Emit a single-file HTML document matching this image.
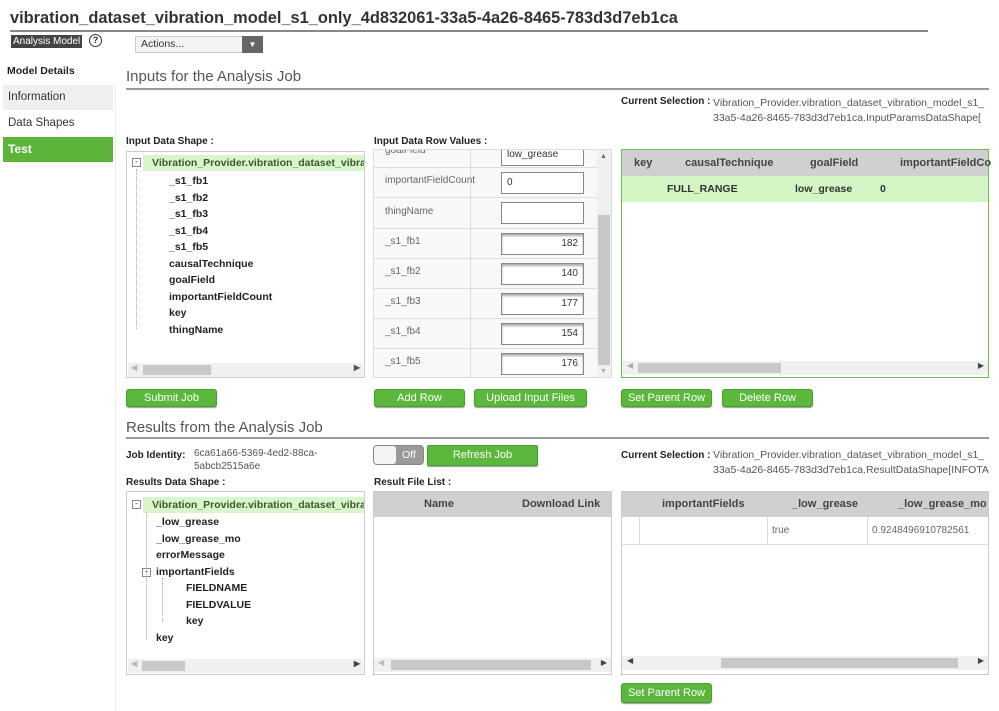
<!DOCTYPE html>
<html><head><meta charset="utf-8"><style>
*{box-sizing:border-box;margin:0;padding:0}
body{width:999px;height:711px;background:#fff;font-family:"Liberation Sans",sans-serif;font-size:11px;color:#333;position:relative;overflow:hidden}
.a{position:absolute;white-space:nowrap}
.b{font-weight:bold}
.btn{position:absolute;height:18px;background:#5cb83c;border:1px solid #4aa02c;border-radius:3px;color:#fff;text-align:center;line-height:16px;font-size:11px;box-shadow:0 1px 1px #999}
.box{position:absolute;border:1px solid #ccc;background:#fff}
.sbh{position:absolute;height:14px;background:#f0f0f0}
.thumb{position:absolute;background:#c8c8c8;top:2px;height:10px}
.tree div{position:absolute;font-weight:bold;font-size:10.5px;color:#222}
.hdr{position:absolute;background:#d0d0d0;font-weight:bold;color:#444}
.inp{position:absolute;left:127px;width:83px;height:22px;border:1px solid #888;background:#fff;font-size:10px;line-height:20px;padding:0 5px;box-shadow:inset 0 2px 2px #aaa}
.lbl{position:absolute;left:11px;font-size:10px;color:#666}
</style></head><body>

<div class="a" style="left:10px;top:9px;font-size:16.4px;font-weight:bold;color:#333">vibration_dataset_vibration_model_s1_only_4d832061-33a5-4a26-8465-783d3d7eb1ca</div>
<div class="a" style="left:10px;top:30px;width:918px;height:2px;background:#888"></div>
<div class="a" style="left:11px;top:35px;height:13px;background:#444;color:#fff;font-size:10px;padding:0 2px;line-height:13px">Analysis Model</div>
<div class="a" style="left:89px;top:34px;width:13px;height:13px;border:1.5px solid #333;border-radius:50%;font-size:9px;text-align:center;line-height:11px;font-weight:bold">?</div>
<div class="a" style="left:135px;top:36px;width:128px;height:17px;border:1px solid #ccc;background:#f4f4f4;font-size:10.5px;line-height:15px;padding-left:5px">Actions...</div>
<div class="a" style="left:242px;top:36px;width:21px;height:17px;background:#666;color:#fff;font-size:8px;text-align:center;line-height:17px">▼</div>

<div class="a b" style="left:7px;top:65px;font-size:10.5px;color:#222">Model Details</div>
<div class="a" style="left:3px;top:85px;width:110px;height:25px;background:#efefef;font-size:11.5px;line-height:25px;padding-left:5px">Information</div>
<div class="a" style="left:3px;top:110px;width:110px;height:26px;background:#fff;font-size:11.5px;line-height:26px;padding-left:5px">Data Shapes</div>
<div class="a b" style="left:3px;top:137px;width:110px;height:25px;background:#5db43b;color:#fff;font-size:12px;line-height:25px;padding-left:5px">Test</div>
<div class="a" style="left:115px;top:85px;width:1px;height:626px;background:#eee"></div>

<div class="a" style="left:126px;top:68px;font-size:15px;color:#555">Inputs for the Analysis Job</div>
<div class="a" style="left:126px;top:88px;width:863px;height:2px;background:#999"></div>
<div class="a b" style="left:621px;top:96px;font-size:10px;color:#222">Current Selection :</div>
<div class="a" style="left:713px;top:96px;font-size:10.5px;line-height:15px;color:#555">Vibration_Provider.vibration_dataset_vibration_model_s1_<br>33a5-4a26-8465-783d3d7eb1ca.InputParamsDataShape[</div>

<div class="a b" style="left:126px;top:136px;font-size:10px;color:#222">Input Data Shape :</div>
<div class="box tree" style="left:126px;top:151px;width:239px;height:227px">
 <div style="left:16px;top:3px;width:221px;height:16px;background:#d9f5cc;font-weight:bold;color:#3a5a2a;line-height:16px;padding-left:9px;overflow:hidden">Vibration_Provider.vibration_dataset_vibrati</div>
 <div style="left:5px;top:6px;width:9px;height:9px;border:1px solid #888;font-size:8px;line-height:6px;text-align:center;font-weight:normal">-</div>
 <div style="left:9px;top:17px;width:0;height:160px;border-left:1px dotted #aaa"></div>
 <div style="left:42px;top:23px">_s1_fb1</div><div style="left:42px;top:40px">_s1_fb2</div><div style="left:42px;top:56px">_s1_fb3</div><div style="left:42px;top:73px">_s1_fb4</div><div style="left:42px;top:89px">_s1_fb5</div><div style="left:42px;top:106px">causalTechnique</div><div style="left:42px;top:122px">goalField</div><div style="left:42px;top:139px">importantFieldCount</div><div style="left:42px;top:155px">key</div><div style="left:42px;top:172px">thingName</div>
 <div class="sbh" style="left:1px;top:211px;width:235px"><div class="thumb" style="left:15px;width:68px"></div><span style="position:absolute;right:3px;top:0;font-size:8px;color:#555">▶</span><span style="position:absolute;left:3px;top:0;font-size:8px;color:#bbb">◀</span></div>
</div>

<div class="a b" style="left:374px;top:136px;font-size:10px;color:#222">Input Data Row Values :</div>
<div class="box" style="left:373px;top:149px;width:239px;height:229px;border-color:#ddd;overflow:hidden">
 <div style="position:absolute;left:0;top:0;width:223px;height:229px;background:#f8f8f8"></div>
 <div style="position:absolute;left:96px;top:0;width:1px;height:229px;background:#ddd"></div>
 <div style="position:absolute;left:0;top:17px;width:223px;height:1px;background:#ddd"></div>
 <div style="position:absolute;left:0;top:47px;width:223px;height:1px;background:#ddd"></div>
 <div style="position:absolute;left:0;top:78px;width:223px;height:1px;background:#ddd"></div>
 <div style="position:absolute;left:0;top:108px;width:223px;height:1px;background:#ddd"></div>
 <div style="position:absolute;left:0;top:138px;width:223px;height:1px;background:#ddd"></div>
 <div style="position:absolute;left:0;top:168px;width:223px;height:1px;background:#ddd"></div>
 <div style="position:absolute;left:0;top:198px;width:223px;height:1px;background:#ddd"></div>
 <div class="lbl" style="top:-5px">goalField</div>
 <div class="inp" style="top:-6px;box-shadow:none">low_grease</div>
 <div class="lbl" style="top:25px">importantFieldCount</div>
 <div class="inp" style="top:22px;box-shadow:none">0</div>
 <div class="lbl" style="top:56px">thingName</div>
 <div class="inp" style="top:52px;box-shadow:none"></div>
 <div class="lbl" style="top:86px">_s1_fb1</div><div class="inp" style="top:83px;text-align:right">182</div>
 <div class="lbl" style="top:116px">_s1_fb2</div><div class="inp" style="top:113px;text-align:right">140</div>
 <div class="lbl" style="top:146px">_s1_fb3</div><div class="inp" style="top:143px;text-align:right">177</div>
 <div class="lbl" style="top:176px">_s1_fb4</div><div class="inp" style="top:173px;text-align:right">154</div>
 <div class="lbl" style="top:206px">_s1_fb5</div><div class="inp" style="top:203px;text-align:right">176</div>
 <div style="position:absolute;left:223px;top:0;width:14px;height:229px;background:#f0f0f0"></div>
 <div style="position:absolute;left:224px;top:65px;width:12px;height:150px;background:#c8c8c8"></div>
 <span style="position:absolute;left:226px;top:3px;font-size:7px;color:#666">▲</span>
 <span style="position:absolute;left:226px;top:218px;font-size:7px;color:#aaa">▼</span>
</div>

<div class="box" style="left:621px;top:149px;width:368px;height:229px;border:1px solid #6ac04a">
 <div class="hdr" style="left:0;top:0;width:366px;height:26px;font-size:11px;line-height:26px">
  <span style="position:absolute;left:12px">key</span><span style="position:absolute;left:63px">causalTechnique</span><span style="position:absolute;left:188px">goalField</span><span style="position:absolute;left:278px">importantFieldCo</span></div>
 <div style="position:absolute;left:0;top:26px;width:366px;height:26px;background:#d3f5c3;font-weight:bold;font-size:10.5px;line-height:26px;color:#333">
  <span style="position:absolute;left:45px">FULL_RANGE</span><span style="position:absolute;left:173px">low_grease</span><span style="position:absolute;left:258px">0</span></div>
 <div class="sbh" style="left:0;top:211px;width:366px"><div class="thumb" style="left:16px;width:143px"></div><span style="position:absolute;right:4px;top:0;font-size:8px;color:#444">▶</span><span style="position:absolute;left:5px;top:0;font-size:8px;color:#aaa">◀</span></div>
</div>

<div class="btn" style="left:126px;top:389px;width:91px">Submit Job</div>
<div class="btn" style="left:374px;top:389px;width:91px">Add Row</div>
<div class="btn" style="left:474px;top:389px;width:113px">Upload Input Files</div>
<div class="btn" style="left:621px;top:389px;width:91px">Set Parent Row</div>
<div class="btn" style="left:722px;top:389px;width:91px">Delete Row</div>

<div class="a" style="left:126px;top:419px;font-size:15px;color:#555">Results from the Analysis Job</div>
<div class="a" style="left:126px;top:437px;width:863px;height:2px;background:#999"></div>
<div class="a b" style="left:126px;top:450px;font-size:10px;color:#222">Job Identity:</div>
<div class="a" style="left:194px;top:447px;font-size:10px;line-height:13px;color:#555">6ca61a66-5369-4ed2-88ca-<br>5abcb2515a6e</div>
<div class="a" style="left:373px;top:445px;width:51px;height:20px;border:1px solid #888;border-radius:4px;background:#999"></div>
<div class="a" style="left:374px;top:446px;width:22px;height:18px;border-radius:3px;background:#f4f4f4"></div>
<div class="a" style="left:402px;top:449px;color:#fff;font-size:10.5px">Off</div>
<div class="btn" style="left:427px;top:445px;width:111px;height:21px;line-height:19px;border-radius:2px">Refresh Job</div>
<div class="a b" style="left:621px;top:450px;font-size:10px;color:#222">Current Selection :</div>
<div class="a" style="left:713px;top:448px;font-size:10.5px;line-height:15px;color:#555">Vibration_Provider.vibration_dataset_vibration_model_s1_<br>33a5-4a26-8465-783d3d7eb1ca.ResultDataShape[INFOTA</div>

<div class="a b" style="left:126px;top:477px;font-size:10px;color:#222">Results Data Shape :</div>
<div class="box tree" style="left:126px;top:491px;width:239px;height:184px">
 <div style="left:16px;top:5px;width:221px;height:16px;background:#d9f5cc;font-weight:bold;color:#3a5a2a;line-height:16px;padding-left:9px;overflow:hidden">Vibration_Provider.vibration_dataset_vibrati</div>
 <div style="left:5px;top:8px;width:9px;height:9px;border:1px solid #888;font-size:8px;line-height:6px;text-align:center;font-weight:normal">-</div>
 <div style="left:19px;top:20px;width:0;height:127px;border-left:1px dotted #aaa"></div>
 <div style="left:29px;top:24px;font-weight:bold">_low_grease</div><div style="left:29px;top:41px">_low_grease_mo</div><div style="left:29px;top:57px">errorMessage</div>
 <div style="left:15px;top:76px;width:9px;height:9px;border:1px solid #888;font-size:8px;line-height:6px;text-align:center;font-weight:normal">-</div>
 <div style="left:29px;top:74px">importantFields</div>
 <div style="left:35px;top:86px;width:0;height:44px;border-left:1px dotted #aaa"></div>
 <div style="left:59px;top:90px">FIELDNAME</div><div style="left:59px;top:107px">FIELDVALUE</div><div style="left:59px;top:123px">key</div><div style="left:29px;top:140px">key</div>
 <div class="sbh" style="left:1px;top:167px;width:235px"><div class="thumb" style="left:14px;width:43px"></div><span style="position:absolute;right:3px;top:0;font-size:8px;color:#444">▶</span><span style="position:absolute;left:3px;top:0;font-size:8px;color:#bbb">◀</span></div>
</div>

<div class="a b" style="left:374px;top:477px;font-size:10px;color:#222">Result File List :</div>
<div class="box" style="left:373px;top:491px;width:239px;height:184px">
 <div class="hdr" style="left:0;top:0;width:237px;height:25px;line-height:25px;font-size:11px"><span style="position:absolute;left:50px">Name</span><span style="position:absolute;left:148px">Download Link</span></div>
 <div class="sbh" style="left:0;top:166px;width:237px"><div class="thumb" style="left:17px;width:200px"></div><span style="position:absolute;right:4px;top:0;font-size:8px;color:#444">▶</span><span style="position:absolute;left:4px;top:0;font-size:8px;color:#bbb">◀</span></div>
</div>

<div class="box" style="left:621px;top:491px;width:368px;height:184px">
 <div class="hdr" style="left:0;top:0;width:366px;height:25px;line-height:25px;font-size:11px"><span style="position:absolute;left:40px">importantFields</span><span style="position:absolute;left:170px">_low_grease</span><span style="position:absolute;left:276px">_low_grease_mo</span></div>
 <div style="position:absolute;left:0;top:25px;width:366px;height:28px;border-bottom:1px solid #ddd;font-size:10px;color:#666;line-height:28px">
  <span style="position:absolute;left:17px;top:0;width:1px;height:28px;background:#ddd"></span>
  <span style="position:absolute;left:145px;top:0;width:1px;height:28px;background:#ddd"></span>
  <span style="position:absolute;left:245px;top:0;width:1px;height:28px;background:#ddd"></span>
  <span style="position:absolute;left:150px">true</span><span style="position:absolute;left:250px">0.9248496910782561</span></div>
 <div class="sbh" style="left:0;top:164px;width:366px"><div class="thumb" style="left:99px;width:237px"></div><span style="position:absolute;right:4px;top:0;font-size:8px;color:#444">▶</span><span style="position:absolute;left:5px;top:0;font-size:8px;color:#444">◀</span></div>
</div>

<div class="btn" style="left:621px;top:683px;width:91px;height:20px;line-height:18px">Set Parent Row</div>
</body></html>
